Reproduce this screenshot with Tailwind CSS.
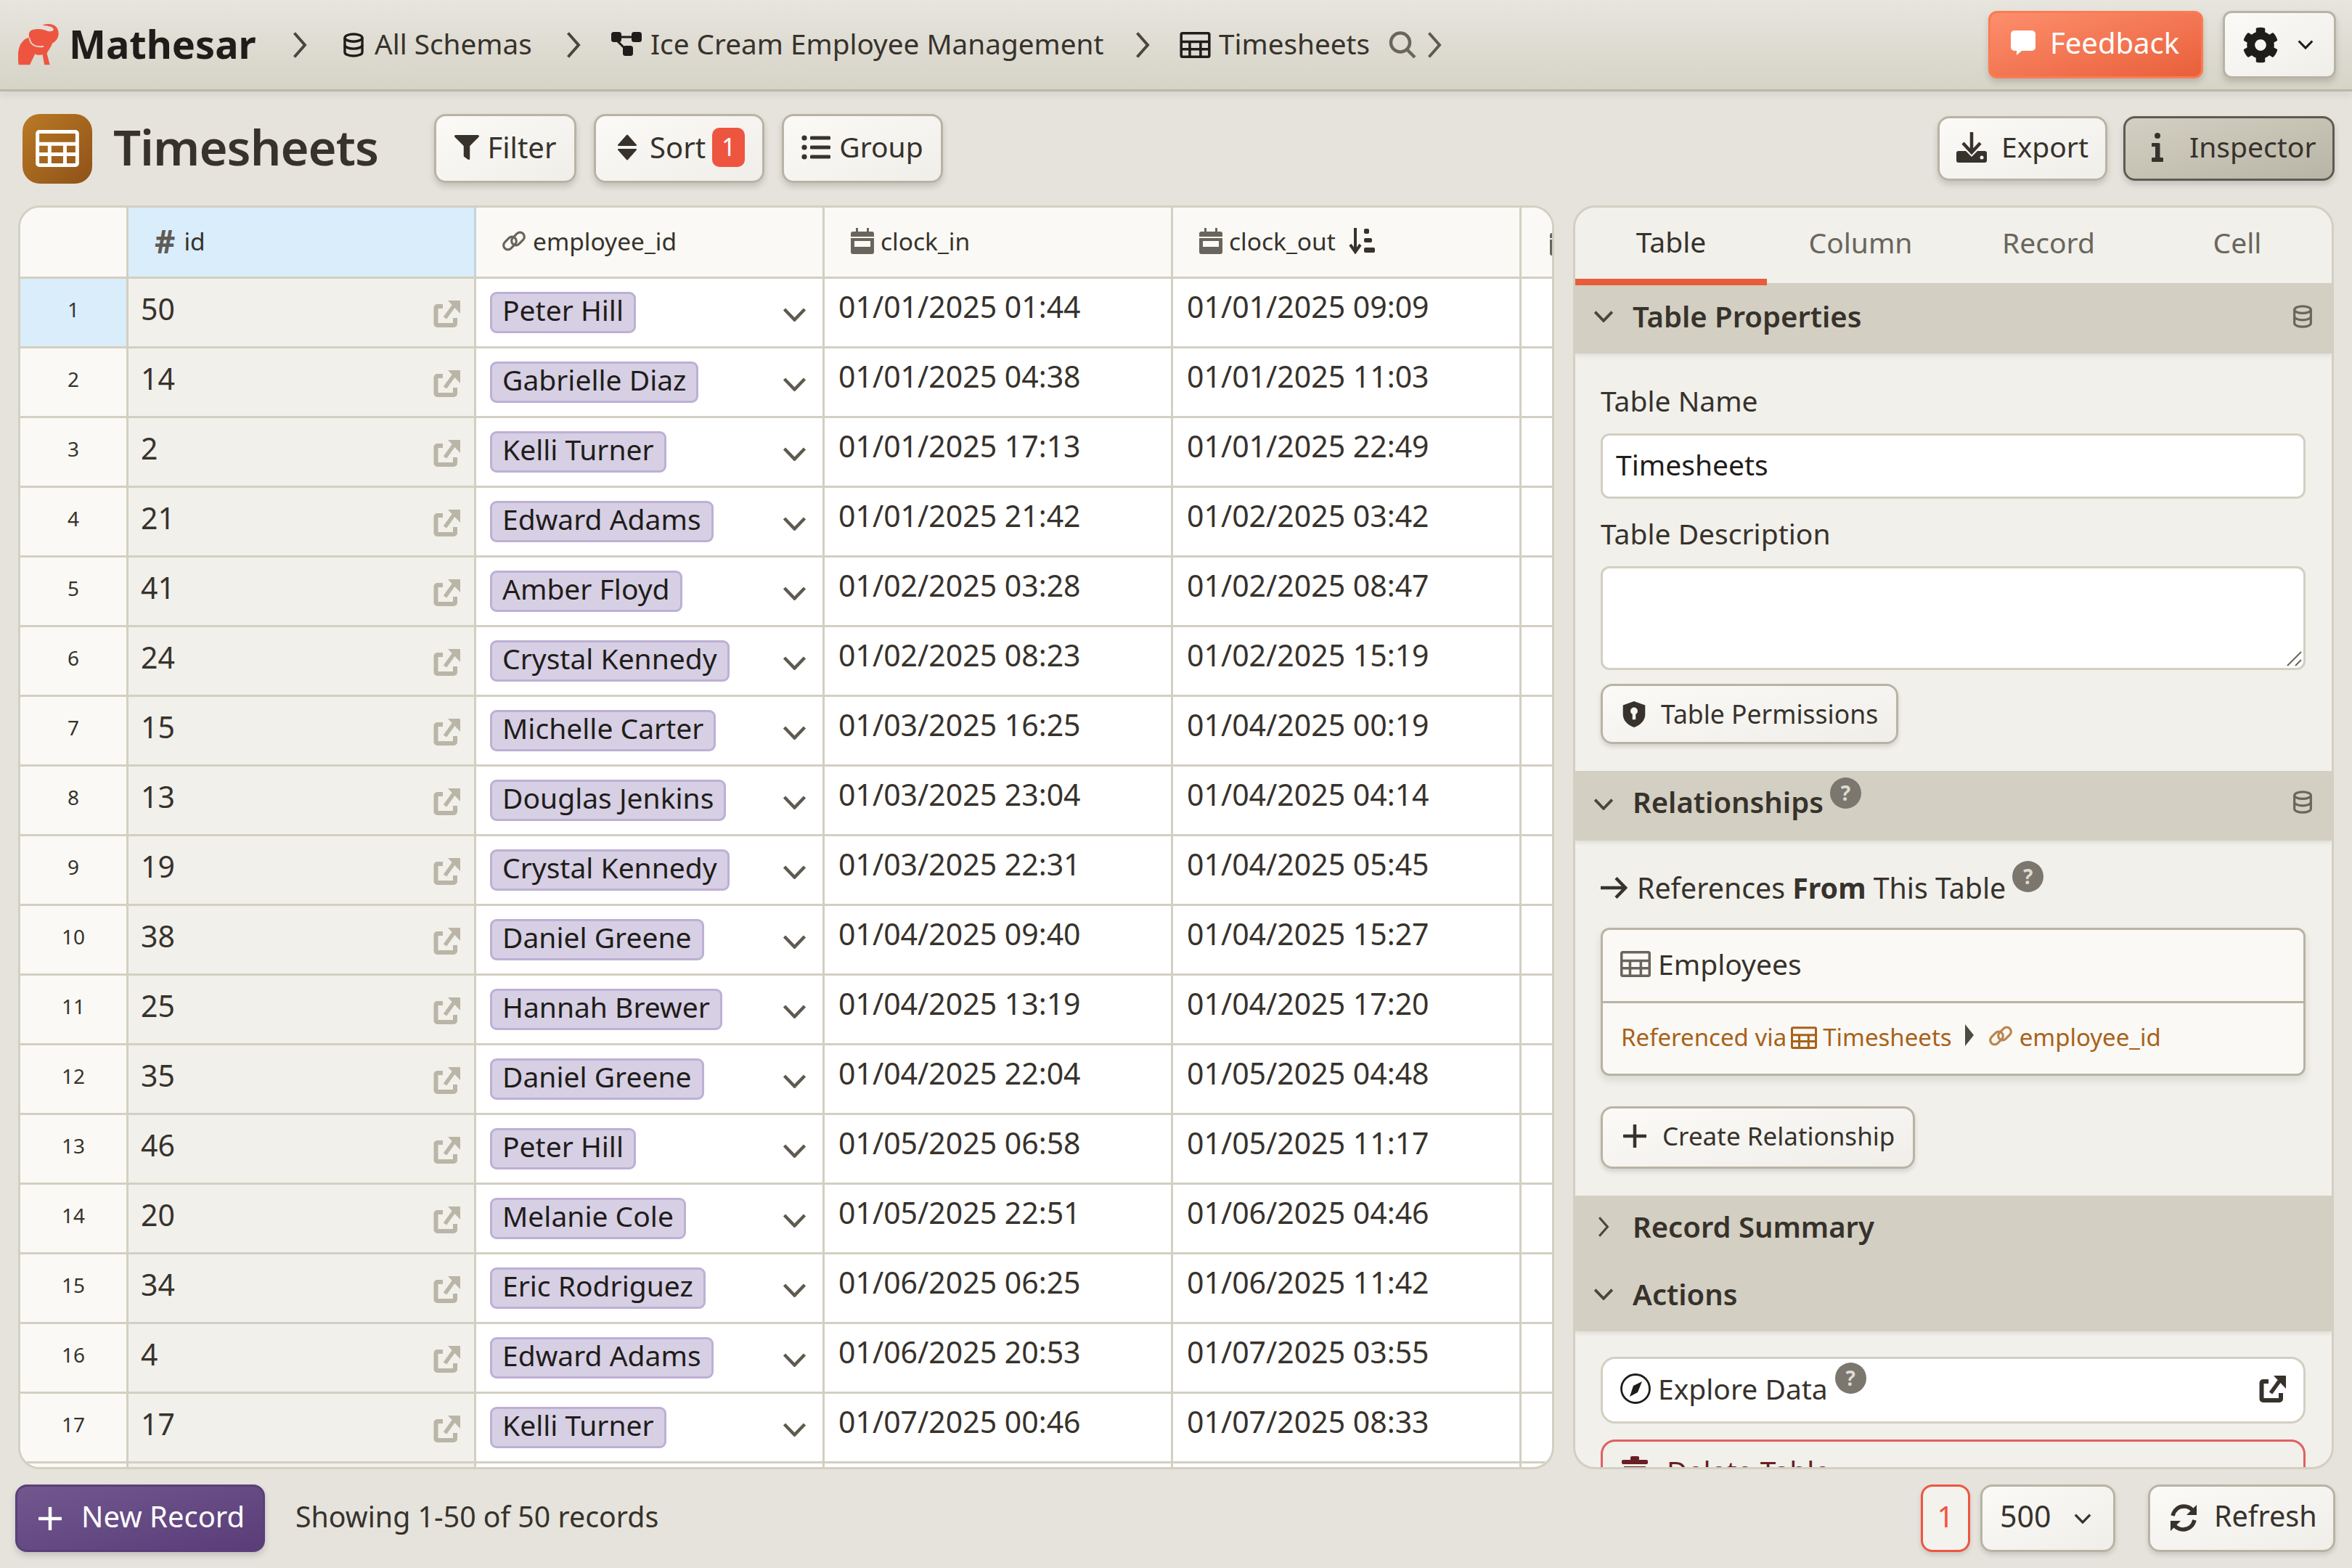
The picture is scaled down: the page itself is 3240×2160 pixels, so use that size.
<!DOCTYPE html>
<html lang="en">
<head>
<meta charset="UTF-8">
<title>Timesheets | Mathesar</title>
<script src="https://cdn.jsdelivr.net/npm/@tailwindcss/browser@4"></script>
</head>
<body class="m-0 overflow-hidden bg-[#e5e3dc] text-[#37322c] font-['Noto_Sans',sans-serif]">

<!-- icon sprite -->
<svg class="hidden">
  <symbol id="i-db" viewBox="0 0 24 24"><g fill="none" stroke="currentColor" stroke-width="2.4"><ellipse cx="12" cy="5" rx="8.5" ry="3.6"/><path d="M3.5 5v14c0 2 3.8 3.6 8.5 3.6s8.5-1.6 8.5-3.6V5"/><path d="M3.5 12c0 2 3.8 3.6 8.5 3.6s8.5-1.6 8.5-3.6"/></g></symbol>
  <symbol id="i-tree" viewBox="0 0 42 36"><g fill="currentColor"><rect x="0" y="0" width="14" height="14" rx="3.5"/><rect x="28" y="0" width="14" height="14" rx="3.5"/><rect x="16" y="19" width="14" height="14" rx="3.5"/></g><path d="M12 7H30M8 12L20 24" stroke="currentColor" stroke-width="3" fill="none"/></symbol>
  <symbol id="i-table" viewBox="0 0 24 20.5"><g fill="none" stroke="currentColor" stroke-width="2"><rect x="1" y="1" width="22" height="18.5" rx="1"/><path d="M1 7.7H23M1 13.5H23M7.7 7.7V19.5M16.2 7.7V19.5"/></g></symbol>
  <symbol id="i-filter" viewBox="0 0 512 512"><path fill="currentColor" d="M487.976 0H24.028C2.71 0-8.047 25.866 7.058 40.971L192 225.941V432c0 7.831 3.821 15.17 10.237 19.662l80 55.98C298.02 518.69 320 507.493 320 487.98V225.941l184.947-184.97C520.021 25.896 509.338 0 487.976 0z"/></symbol>
  <symbol id="i-sort" viewBox="0 0 28 36"><path fill="currentColor" stroke="currentColor" stroke-width="2" stroke-linejoin="round" d="M14 1.5L26 15H2ZM14 34.500L26 21H2Z"/></symbol>
  <symbol id="i-list" viewBox="0 0 40 36"><g fill="currentColor"><circle cx="4" cy="5" r="3.600"/><circle cx="4" cy="18" r="3.600"/><circle cx="4" cy="31" r="3.600"/><rect x="12" y="2.500" width="28" height="5" rx="1.500"/><rect x="12" y="15.500" width="28" height="5" rx="1.500"/><rect x="12" y="28.500" width="28" height="5" rx="1.500"/></g></symbol>
  <symbol id="i-comment" viewBox="0 0 34 34"><path fill="currentColor" d="M5 0h24a5 5 0 0 1 5 5v18a5 5 0 0 1-5 5H15l-7 6v-6H5a5 5 0 0 1-5-5V5a5 5 0 0 1 5-5z"/></symbol>
  <symbol id="i-gear" viewBox="0 0 512 512"><path fill="currentColor" d="M487.4 315.7l-42.6-24.6c4.3-23.2 4.3-47 0-70.2l42.6-24.6c4.9-2.8 7.1-8.6 5.5-14-11.1-35.6-30-67.8-54.7-94.6-3.8-4.1-10-5.1-14.8-2.3L380.8 110c-17.9-15.4-38.5-27.3-60.8-35.1V25.8c0-5.6-3.9-10.5-9.4-11.7-36.7-8.2-74.3-7.8-109.2 0-5.5 1.2-9.4 6.1-9.4 11.7V75c-22.2 7.9-42.8 19.8-60.8 35.1L88.7 85.5c-4.9-2.8-11-1.9-14.8 2.3-24.7 26.7-43.6 58.9-54.7 94.6-1.7 5.4.6 11.2 5.5 14L67.3 221c-4.3 23.2-4.3 47 0 70.2l-42.6 24.6c-4.9 2.8-7.1 8.6-5.5 14 11.1 35.6 30 67.8 54.7 94.6 3.8 4.1 10 5.1 14.8 2.3l42.6-24.6c17.9 15.4 38.5 27.3 60.8 35.1v49.2c0 5.6 3.9 10.5 9.4 11.7 36.7 8.2 74.3 7.8 109.2 0 5.5-1.2 9.4-6.1 9.4-11.7v-49.2c22.2-7.9 42.8-19.8 60.8-35.1l42.6 24.6c4.9 2.8 11 1.9 14.8-2.3 24.7-26.7 43.6-58.9 54.7-94.6 1.500-5.500-.7-11.3-5.600-14.1zM256 336c-44.100 0-80-35.900-80-80s35.900-80 80-80 80 35.900 80 80-35.900 80-80 80z"/></symbol>
  <symbol id="i-plus" viewBox="0 0 32 32"><path d="M16 1V31M1 16H31" stroke="currentColor" stroke-width="4.500" stroke-linecap="round" fill="none"/></symbol>
  <symbol id="i-chev-d" viewBox="0 0 33 19"><path d="M2.500 2L16.500 16.500L30.500 2" fill="none" stroke="currentColor" stroke-width="4.500"/></symbol>
  <symbol id="i-chev-r" viewBox="0 0 20 36"><path d="M2.500 1.500L17 18L2.500 34.500" fill="none" stroke="currentColor" stroke-width="4"/></symbol>
  <symbol id="i-search" viewBox="0 0 40 38"><g fill="none" stroke="currentColor" stroke-width="4.500"><circle cx="17" cy="15.500" r="13"/><path d="M26 25L37 36"/></g></symbol>
  <symbol id="i-export" viewBox="0 0 42 42"><g fill="currentColor"><path d="M3 26h10l8 8 8-8h10a3 3 0 0 1 3 3v10a3 3 0 0 1-3 3H3a3 3 0 0 1-3-3V29a3 3 0 0 1 3-3z"/></g><path d="M21 0V27M9 15L21 28L33 15" stroke="currentColor" stroke-width="4.500" fill="none"/><circle cx="35" cy="35" r="2.500" fill="#f7f6f2"/></symbol>
  <symbol id="i-info" viewBox="0 0 16 40"><g fill="currentColor"><circle cx="8" cy="4" r="4"/><path d="M1 14h9a1.500 1.500 0 0 1 1.500 1.500V34H14a2 2 0 0 1 0 6H2a2 2 0 0 1 0-6h3V19H1a2.500 2.500 0 0 1 0-5z"/></g></symbol>
  <symbol id="i-link" viewBox="0 -1 34 30"><g fill="none" stroke="currentColor" stroke-width="3.200"><rect x="1.500" y="11" width="20" height="12" rx="6" transform="rotate(-45 11.500 17)"/><rect x="12.500" y="5" width="20" height="12" rx="6" transform="rotate(-45 22.500 11)"/></g></symbol>
  <symbol id="i-cal" viewBox="0 0 32 36"><path fill="currentColor" d="M7 0h3v5h12V0h3v5h4a3 3 0 0 1 3 3v25a3 3 0 0 1-3 3H3a3 3 0 0 1-3-3V8a3 3 0 0 1 3-3h4z"/><rect x="0" y="12" width="32" height="2" fill="#f4f3ee"/><rect x="5" y="18" width="22" height="8" fill="#faf9f5"/></symbol>
  <symbol id="i-ext" viewBox="0 0 37 37"><path d="M13 8H5.500a2 2 0 0 0-2 2v22a2 2 0 0 0 2 2H28a2 2 0 0 0 2-2v-8" fill="none" stroke="currentColor" stroke-width="6" stroke-linejoin="round"/><path d="M16 24L29 6" stroke="currentColor" stroke-width="5.500" fill="none"/><path d="M20 0H36a1 1 0 0 1 1 1V18Z" fill="currentColor"/></symbol>
  <symbol id="i-sortdesc" viewBox="0 0 36 36"><path d="M9 0V32M2 23L9 33L16 23" fill="none" stroke="currentColor" stroke-width="4"/><g fill="currentColor"><rect x="21" y="1" width="7" height="7" rx="2"/><rect x="21" y="14" width="11" height="6" rx="2"/><rect x="21" y="27" width="15" height="7" rx="2"/></g></symbol>
  <symbol id="i-shield" viewBox="0 0 34 40"><path fill="currentColor" d="M17 0L34 6V20C34 30 26 37 17 40C8 37 0 30 0 20V6Z"/><circle cx="17" cy="15" r="5.500" fill="#f5f4ef"/><rect x="14.500" y="16" width="5" height="12" fill="#f5f4ef"/></symbol>
  <symbol id="i-arrow" viewBox="0 0 37 32"><path d="M0 16H34M21 2.500L34 16L21 29.500" fill="none" stroke="currentColor" stroke-width="4.500"/></symbol>
  <symbol id="i-compass" viewBox="0 0 42 42"><circle cx="21" cy="21" r="19.500" fill="none" stroke="currentColor" stroke-width="2.800"/><path fill="currentColor" d="M30 11L24 26L13 32L18 17Z"/></symbol>
  <symbol id="i-refresh" viewBox="0 0 40 40"><g fill="none" stroke="currentColor" stroke-width="5.500"><path d="M5 17C7 9 13 4 20.500 4C26 4 30 6.500 33 10"/><path d="M35 23C33 31 27 36 19.500 36C14 36 10 33.500 7 30"/></g><path fill="currentColor" d="M38 2V16H24ZM2 38V24H16Z"/></symbol>
  <symbol id="i-trash" viewBox="0 0 36 40"><g fill="currentColor"><rect x="0" y="5" width="36" height="6" rx="2"/><rect x="12" y="0" width="12" height="6" rx="2"/><path d="M3 14H33V37a3 3 0 0 1-3 3H6a3 3 0 0 1-3-3Z"/></g></symbol>
  <symbol id="i-tri" viewBox="0 0 12 30"><path fill="currentColor" d="M0 0L12 15L0 30Z"/></symbol>
</svg>

<div class="flex flex-col w-[3240px] h-[2160px]">

  <!-- top bar -->
  <header class="flex items-center shrink-0 h-[126px] pl-[25px] pr-[22px] border-b-[3px] border-[#bcb7a9] bg-linear-to-b from-[#e7e5de] to-[#d6d3c7] shadow-[0_6px_10px_rgba(0,0,0,0.06)]">
    <svg class="w-[57px] h-[57px] shrink-0 text-[#ee5540]" viewBox="0 0 170 170"><path fill="currentColor" d="M100 5C120-4 158-4 165 30C170 55 155 72 140 80C136 95 125 108 118 120L130 168H108L100 125C85 130 75 128 70 122L48 168H2C-4 130 0 90 18 72C28 60 40 55 46 58C42 40 45 28 60 24C80 18 105 22 118 28C130 32 142 32 145 24C148 14 130 8 100 5Z"/><path d="M46 58C50 85 70 98 105 92" fill="none" stroke="#e3e1d9" stroke-width="5"/></svg>
    <span class="ml-[13px] pb-[4px] text-[54px] font-bold text-[#1f1d1a] leading-none w-[308px] shrink-0">Mathesar</span>
    <svg class="w-[20px] h-[36px] text-[#4a463e] shrink-0"><use href="#i-chev-r"/></svg>
    <svg class="ml-[47px] w-[34px] h-[34px] text-[#1f1d1a] shrink-0"><use href="#i-db"/></svg>
    <span class="ml-[12px] pb-[3px] text-[38.700px] w-[264px] shrink-0">All Schemas</span>
    <svg class="w-[20px] h-[36px] text-[#4a463e] shrink-0"><use href="#i-chev-r"/></svg>
    <svg class="ml-[41px] w-[44px] h-[36px] text-[#1f1d1a] shrink-0"><use href="#i-tree"/></svg>
    <span class="ml-[11px] pb-[3px] text-[38.700px] w-[668px] shrink-0">Ice Cream Employee Management</span>
    <svg class="w-[20px] h-[36px] text-[#4a463e] shrink-0"><use href="#i-chev-r"/></svg>
    <svg class="ml-[41px] w-[43px] h-[36px] text-[#1f1d1a] shrink-0"><use href="#i-table"/></svg>
    <span class="ml-[11px] pb-[3px] text-[38.700px] w-[233px] shrink-0">Timesheets</span>
    <svg class="w-[40px] h-[38px] text-[#6a665c] shrink-0"><use href="#i-search"/></svg>
    <svg class="ml-[14px] w-[20px] h-[36px] text-[#5f5a50] shrink-0"><use href="#i-chev-r"/></svg>
    <button class="ml-auto flex items-center gap-[20px] w-[296px] h-[93px] pl-[28px] pb-[5px] rounded-[12px] border-[3px] border-[#fb7b52] bg-linear-to-br from-[#fd8e6c] to-[#e95f3a] text-white text-[40px] shadow-[0_5px_8px_rgba(0,0,0,0.15)]">
      <svg class="w-[34px] h-[38px]"><use href="#i-comment"/></svg>Feedback
    </button>
    <button class="ml-[27px] flex items-center gap-[26px] w-[156px] h-[93px] pl-[24px] rounded-[12px] border-[3px] border-[#b9b3a4] bg-linear-to-br from-[#fbfaf7] to-[#f0eee9] text-[#1f1d1a] shadow-[0_5px_8px_rgba(0,0,0,0.15)]">
      <svg class="w-[50px] h-[50px]"><use href="#i-gear"/></svg>
      <svg class="w-[22px] h-[13px]"><use href="#i-chev-d"/></svg>
    </button>
  </header>

  <!-- table title + actions -->
  <div class="flex items-center shrink-0 h-[157px] pl-[31px] pr-[24px]">
    <div class="flex items-center justify-center w-[96px] h-[96px] rounded-[24px] bg-linear-to-br from-[#bb7a25] to-[#8e5218] text-white shrink-0">
      <svg class="w-[60px] h-[51px]"><use href="#i-table"/></svg>
    </div>
    <h1 class="ml-[29px] w-[442px] shrink-0 pb-[4px] text-[67px] font-semibold leading-none tracking-[-1px]">Timesheets</h1>
    <button class="flex items-center justify-center gap-[12px] w-[196px] h-[95px] pb-[4px] rounded-[16px] border-[3px] border-[#b9b3a4] bg-linear-to-br from-[#fbfaf7] to-[#f0eee9] text-[40px] shadow-[0_5px_8px_rgba(0,0,0,0.15)]">
      <svg class="w-[34px] h-[34px]"><use href="#i-filter"/></svg>Filter
    </button>
    <button class="ml-[24px] flex items-center gap-[17px] w-[235px] h-[95px] pl-[29px] pb-[4px] rounded-[16px] border-[3px] border-[#b9b3a4] bg-linear-to-br from-[#fbfaf7] to-[#f0eee9] text-[40px] shadow-[0_5px_8px_rgba(0,0,0,0.15)]">
      <svg class="w-[28px] h-[36px]"><use href="#i-sort"/></svg>Sort
      <span class="flex items-center justify-center -ml-[8px] w-[45px] h-[54px] rounded-[10px] bg-[#ee5540] text-white text-[34px]">1</span>
    </button>
    <button class="ml-[24px] flex items-center justify-center gap-[12px] w-[222px] h-[95px] pb-[4px] rounded-[16px] border-[3px] border-[#b9b3a4] bg-linear-to-br from-[#fbfaf7] to-[#f0eee9] text-[39px] shadow-[0_5px_8px_rgba(0,0,0,0.15)]">
      <svg class="w-[40px] h-[36px]"><use href="#i-list"/></svg>Group
    </button>
    <button class="ml-auto flex items-center justify-center gap-[20px] w-[234px] h-[89px] pb-[4px] rounded-[16px] border-[3px] border-[#b9b3a4] bg-linear-to-br from-[#fbfaf7] to-[#f0eee9] text-[39px] shadow-[0_5px_8px_rgba(0,0,0,0.15)]">
      <svg class="w-[42px] h-[42px]"><use href="#i-export"/></svg>Export
    </button>
    <button class="ml-[22px] flex items-center gap-[36px] w-[291px] h-[89px] pl-[36px] pb-[4px] rounded-[16px] border-[3px] border-[#5f5b51] bg-linear-to-br from-[#d3cfc2] to-[#b9b5a6] text-[39px] shadow-[0_5px_8px_rgba(0,0,0,0.15)]">
      <svg class="w-[16px] h-[40px]"><use href="#i-info"/></svg>Inspector
    </button>
  </div>

  <!-- main -->
  <div class="flex shrink-0 h-[1741px] pl-[25px] gap-[26px]">

    <!-- sheet -->
    <div class="w-[2116px] shrink-0 overflow-hidden rounded-[30px] border-[3px] border-[#d3cfc2] bg-white">
      <div class="flex h-[98px] border-b-[3px] border-[#d3cfc2] bg-[#faf9f5] text-[33.500px]">
        <div class="w-[149px] shrink-0 border-r-[3px] border-[#d3cfc2]"></div>
        <div class="flex items-center gap-[12px] w-[479px] shrink-0 pl-[36px] pb-[3px] border-r-[3px] border-[#c8d2da] bg-[#d9edfb]"><span class="text-[#5f5c56] text-[44px] font-bold leading-none">#</span>id</div>
        <div class="flex items-center gap-[8px] w-[480px] shrink-0 pl-[34px] pb-[3px] border-r-[3px] border-[#d3cfc2]"><svg class="w-[36px] h-[30px] text-[#6a655c]"><use href="#i-link"/></svg>employee_id</div>
        <div class="flex items-center gap-[9px] w-[480px] shrink-0 pl-[36px] pb-[3px] border-r-[3px] border-[#d3cfc2]"><svg class="w-[32px] h-[36px] text-[#6a655c]"><use href="#i-cal"/></svg>clock_in</div>
        <div class="flex items-center gap-[9px] w-[480px] shrink-0 pl-[36px] pb-[3px] border-r-[3px] border-[#d3cfc2]"><svg class="w-[32px] h-[36px] text-[#6a655c]"><use href="#i-cal"/></svg>clock_out<svg class="ml-[9px] w-[36px] h-[36px]"><use href="#i-sortdesc"/></svg></div>
        <div class="flex items-center pl-[39px] overflow-hidden"><svg class="w-[32px] h-[36px] shrink-0 text-[#6a655c]"><use href="#i-cal"/></svg></div>
      </div>
      <div id="rows"></div>
    </div>

    <!-- inspector -->
    <aside class="flex flex-col w-[1048px] shrink-0 overflow-hidden rounded-[30px] border-[3px] border-[#d3cfc2] bg-[#f1f0eb]">
      <div class="flex shrink-0 h-[104px] text-[39px] text-[#6a665c]">
        <div class="relative z-10 flex items-center justify-center w-[264px] h-[107px] pb-[4px] border-b-[9px] border-[#e85c3a] text-[#37322c]">Table</div>
        <div class="flex items-center justify-center w-[258px] pb-[8px]">Column</div>
        <div class="flex items-center justify-center w-[260px] pb-[8px]">Record</div>
        <div class="flex items-center justify-center w-[260px] pb-[8px]">Cell</div>
      </div>

      <div class="flex items-center shrink-0 h-[97px] pb-[6px] pl-[25px] pr-[24px] bg-[#d3cfc2] shadow-[0_3px_6px_rgba(0,0,0,0.08)]">
        <svg class="w-[28px] h-[16px] text-[#4a463e]"><use href="#i-chev-d"/></svg>
        <span class="ml-[26px] text-[40px] font-semibold">Table Properties</span>
        <svg class="ml-auto w-[32px] h-[32px] text-[#6a665c]"><use href="#i-db"/></svg>
      </div>
      <div class="flex flex-col items-start shrink-0 px-[35px] pt-[40px] pb-[37px]">
        <label class="h-[54px] text-[39px] leading-[50px]">Table Name</label>
        <div class="flex items-center mt-[16px] w-[971px] h-[90px] pl-[18px] pb-[4px] rounded-[12px] border-[3px] border-[#d3cfc2] bg-white text-[39px] text-[#1f1d1a]">Timesheets</div>
        <label class="mt-[23px] h-[54px] text-[39px] leading-[50px]">Table Description</label>
        <div class="relative mt-[16px] w-[971px] h-[143px] rounded-[12px] border-[3px] border-[#d3cfc2] bg-white">
          <svg class="absolute right-[2px] bottom-[2px] w-[22px] h-[22px] text-[#6a665c]" viewBox="0 0 22 22"><path d="M2 21L21 2M13 21L21 13" stroke="currentColor" stroke-width="2"/></svg>
        </div>
        <button class="flex items-center gap-[20px] mt-[19px] w-[410px] h-[83px] pl-[26px] rounded-[16px] border-[3px] border-[#b9b3a4] bg-linear-to-br from-[#fbfaf7] to-[#f0eee9] text-[35.500px] shadow-[0_4px_6px_rgba(0,0,0,0.12)]">
          <svg class="w-[34px] h-[36px]"><use href="#i-shield"/></svg>Table Permissions
        </button>
      </div>

      <div class="flex items-center shrink-0 h-[96px] pb-[10px] pl-[25px] pr-[24px] bg-[#d3cfc2] shadow-[0_3px_6px_rgba(0,0,0,0.08)]">
        <svg class="w-[28px] h-[16px] mt-[6px] text-[#4a463e]"><use href="#i-chev-d"/></svg>
        <span class="ml-[26px] text-[40px] font-semibold">Relationships</span>
        <span class="mb-[26px] ml-[9px] flex items-center justify-center w-[43px] h-[43px] rounded-full bg-[#7b776e] text-[#dedbd2] text-[28px] font-bold leading-none">?</span>
        <svg class="ml-auto w-[32px] h-[36px] text-[#6a665c]"><use href="#i-db"/></svg>
      </div>
      <div class="flex flex-col items-start shrink-0 px-[35px] pt-[40px] pb-[37px]">
        <div class="flex items-center h-[54px] pb-[4px] text-[39.300px]">
          <svg class="w-[37px] h-[32px] mr-[13px]"><use href="#i-arrow"/></svg>
          <span>References <b class="font-bold">From</b> This Table</span>
          <span class="mb-[32px] ml-[9px] flex items-center justify-center w-[43px] h-[43px] rounded-full bg-[#7b776e] text-[#dedbd2] text-[28px] font-bold leading-none">?</span>
        </div>
        <div class="mt-[26px] w-[971px] h-[204px] rounded-[12px] border-[3px] border-[#b9b3a4] bg-[#faf9f5] shadow-[0_6px_12px_rgba(0,0,0,0.1)]">
          <div class="flex items-center gap-[10px] h-[101px] pl-[24px] pb-[4px] border-b-[3px] border-[#b9b3a4] text-[39px]">
            <svg class="w-[42px] h-[36px] text-[#6a655c]"><use href="#i-table"/></svg>Employees
          </div>
          <div class="flex items-center h-[97px] pl-[25px] pb-[3px] text-[33px] text-[#a8621a]">
            <span>Referenced via</span>
            <svg class="ml-[6px] w-[36px] h-[31px]"><use href="#i-table"/></svg>
            <span class="ml-[8px]">Timesheets</span>
            <svg class="ml-[18px] w-[12px] h-[30px] mb-[6px] text-[#4d4a42]"><use href="#i-tri"/></svg>
            <svg class="ml-[20px] w-[34px] h-[30px] mb-[4px] text-[#bb8550]"><use href="#i-link"/></svg>
            <span class="ml-[9px]">employee_id</span>
          </div>
        </div>
        <button class="flex items-center gap-[22px] mt-[42px] w-[433px] h-[86px] pl-[28px] pb-[4px] rounded-[16px] border-[3px] border-[#b9b3a4] bg-linear-to-br from-[#fbfaf7] to-[#f0eee9] text-[35px] shadow-[0_4px_6px_rgba(0,0,0,0.12)]">
          <svg class="w-[32px] h-[32px]"><use href="#i-plus"/></svg>Create Relationship
        </button>
      </div>

      <div class="flex items-center shrink-0 h-[93px] pb-[8px] pl-[25px] bg-[#d3cfc2]">
        <svg class="w-[16px] h-[28px] ml-[6px] mr-[6px] text-[#4a463e]"><use href="#i-chev-r"/></svg>
        <span class="ml-[26px] text-[40px] font-semibold">Record Summary</span>
      </div>
      <div class="flex items-center shrink-0 h-[94px] pb-[8px] pl-[25px] bg-[#d3cfc2] shadow-[0_3px_6px_rgba(0,0,0,0.08)]">
        <svg class="w-[28px] h-[16px] text-[#4a463e]"><use href="#i-chev-d"/></svg>
        <span class="ml-[26px] text-[40px] font-semibold">Actions</span>
      </div>
      <div class="flex flex-col shrink-0 px-[35px] pt-[35px]">
        <div class="flex items-center h-[92px] w-[971px] pl-[24px] pr-[24px] pb-[4px] rounded-[20px] border-[3px] border-[#d3cfc2] bg-white text-[39px]">
          <svg class="w-[42px] h-[42px] mr-[10px] text-[#1f1d1a]"><use href="#i-compass"/></svg>Explore Data
          <span class="mb-[30px] ml-[10px] flex items-center justify-center w-[43px] h-[43px] rounded-full bg-[#7b776e] text-[#dedbd2] text-[28px] font-bold leading-none">?</span>
          <svg class="ml-auto w-[37px] h-[37px]"><use href="#i-ext"/></svg>
        </div>
        <div class="flex items-center gap-[26px] mt-[22px] h-[92px] w-[971px] pl-[26px] pb-[6px] rounded-[20px] border-[3px] border-[#e06060] text-[39px] text-[#6a1f24]">
          <svg class="w-[36px] h-[40px]"><use href="#i-trash"/></svg>Delete Table
        </div>
      </div>
    </aside>
  </div>

  <!-- footer -->
  <footer class="flex items-center flex-1 pl-[21px] pr-[23px] pb-[2px]">
    <button class="flex items-center gap-[27px] w-[344px] h-[93px] pl-[29px] pb-[4px] rounded-[16px] border-[3px] border-[#5a4079] bg-linear-to-br from-[#72578f] to-[#5a3d78] text-white text-[40px] shadow-[0_5px_8px_rgba(0,0,0,0.15)]">
      <svg class="w-[32px] h-[32px] mt-[6px]"><use href="#i-plus"/></svg>New Record
    </button>
    <span class="ml-[42px] pb-[4px] text-[39.300px]">Showing 1-50 of 50 records</span>
    <button class="ml-auto flex items-center justify-center w-[68px] h-[93px] pb-[4px] rounded-[16px] border-[3px] border-[#ee5540] bg-[#f3f2ed] text-[#ee5540] text-[40px] shadow-[0_4px_6px_rgba(0,0,0,0.12)]">1</button>
    <button class="ml-[14px] flex items-center gap-[32px] w-[186px] h-[93px] pl-[24px] pb-[4px] rounded-[16px] border-[3px] border-[#b9b3a4] bg-linear-to-br from-[#fbfaf7] to-[#f0eee9] text-[41px] shadow-[0_4px_6px_rgba(0,0,0,0.12)]">500
      <svg class="w-[24px] h-[14px] mt-[6px]"><use href="#i-chev-d"/></svg>
    </button>
    <button class="ml-[45px] flex items-center gap-[22px] w-[258px] h-[93px] pl-[26px] pb-[4px] rounded-[16px] border-[3px] border-[#b9b3a4] bg-linear-to-br from-[#fbfaf7] to-[#f0eee9] text-[39.500px] shadow-[0_4px_6px_rgba(0,0,0,0.12)]">
      <svg class="w-[40px] h-[40px] mt-[4px]"><use href="#i-refresh"/></svg>Refresh
    </button>
  </footer>
</div>

<script>
  const records = [
    [50, 'Peter Hill', '01/01/2025 01:44', '01/01/2025 09:09'],
    [14, 'Gabrielle Diaz', '01/01/2025 04:38', '01/01/2025 11:03'],
    [2, 'Kelli Turner', '01/01/2025 17:13', '01/01/2025 22:49'],
    [21, 'Edward Adams', '01/01/2025 21:42', '01/02/2025 03:42'],
    [41, 'Amber Floyd', '01/02/2025 03:28', '01/02/2025 08:47'],
    [24, 'Crystal Kennedy', '01/02/2025 08:23', '01/02/2025 15:19'],
    [15, 'Michelle Carter', '01/03/2025 16:25', '01/04/2025 00:19'],
    [13, 'Douglas Jenkins', '01/03/2025 23:04', '01/04/2025 04:14'],
    [19, 'Crystal Kennedy', '01/03/2025 22:31', '01/04/2025 05:45'],
    [38, 'Daniel Greene', '01/04/2025 09:40', '01/04/2025 15:27'],
    [25, 'Hannah Brewer', '01/04/2025 13:19', '01/04/2025 17:20'],
    [35, 'Daniel Greene', '01/04/2025 22:04', '01/05/2025 04:48'],
    [46, 'Peter Hill', '01/05/2025 06:58', '01/05/2025 11:17'],
    [20, 'Melanie Cole', '01/05/2025 22:51', '01/06/2025 04:46'],
    [34, 'Eric Rodriguez', '01/06/2025 06:25', '01/06/2025 11:42'],
    [4, 'Edward Adams', '01/06/2025 20:53', '01/07/2025 03:55'],
    [17, 'Kelli Turner', '01/07/2025 00:46', '01/07/2025 08:33'],
    ['', '', '', '']
  ];

  document.getElementById('rows').innerHTML = records.map((r, i) => `
    <div class="flex h-[96px] border-b-[3px] border-[#d3cfc2]">
      <div class="flex items-center justify-center w-[149px] shrink-0 pb-[10px] border-r-[3px] border-[#d3cfc2] text-[28px] ${i === 0 ? 'bg-[#d9edfb]' : 'bg-[#faf9f5]'}">${r[0] === '' ? '' : i + 1}</div>
      <div class="flex items-center justify-between w-[479px] shrink-0 pl-[17px] pr-[19px] border-r-[3px] border-[#d3cfc2] bg-[#f1f0eb] text-[41px]">
        <span class="pb-[10px]">${r[0]}</span>
        ${r[0] === '' ? '' : '<svg class="w-[37px] h-[37px] mt-[4px] text-[#bab5a6]"><use href="#i-ext"/></svg>'}
      </div>
      <div class="flex items-center justify-between w-[480px] shrink-0 pl-[19px] pr-[22px] border-r-[3px] border-[#d3cfc2]">
        ${r[0] === '' ? '' : `<span class="flex items-center h-[57px] px-[14px] pb-[7px] rounded-[9px] border-[3px] border-[#bdb0d5] bg-[#d7cfe4] text-[#1f1d1a] text-[39px]">${r[1]}</span>
        <svg class="w-[33px] h-[19px] mt-[5px] text-[#5f5a50]"><use href="#i-chev-d"/></svg>`}
      </div>
      <div class="flex items-center w-[480px] shrink-0 pl-[19px] pb-[16px] border-r-[3px] border-[#d3cfc2] text-[41px]">${r[2]}</div>
      <div class="flex items-center w-[480px] shrink-0 pl-[19px] pb-[16px] border-r-[3px] border-[#d3cfc2] text-[41px]">${r[3]}</div>
    </div>`).join('');
</script>
</body>
</html>
